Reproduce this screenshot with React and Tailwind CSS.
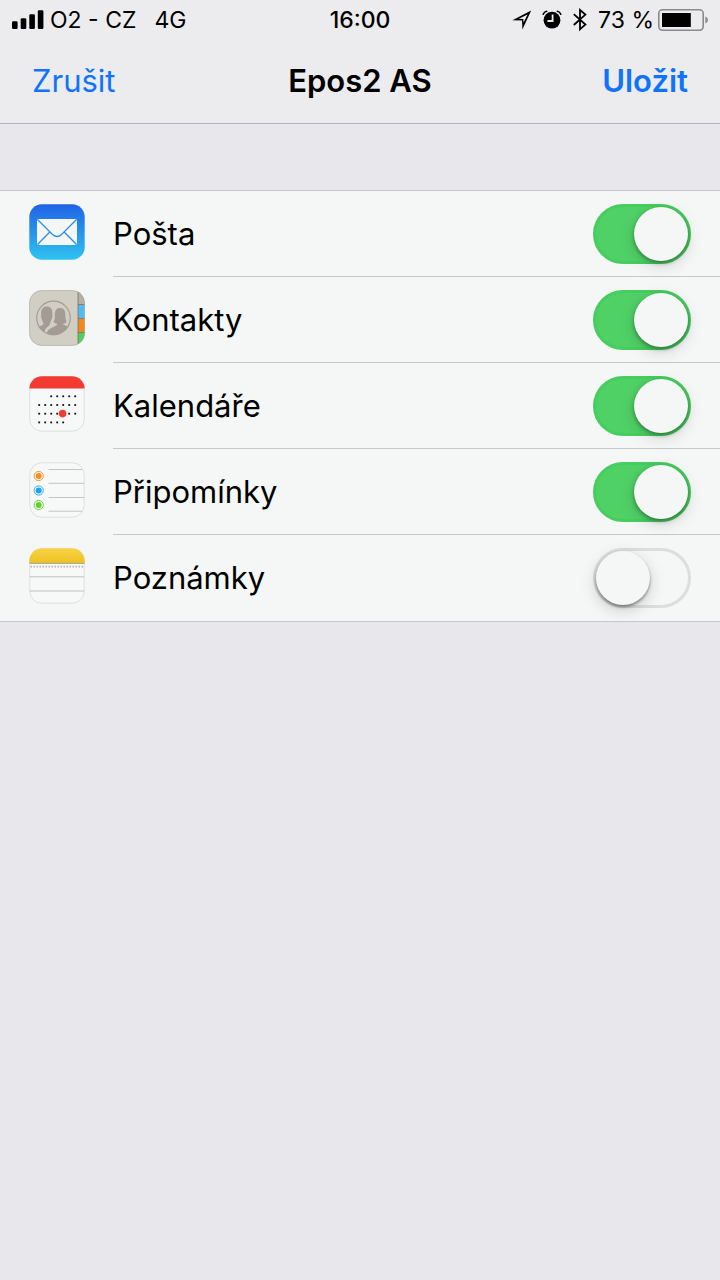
import React, { useState } from 'react';
import clsx from 'clsx';

const SignalIcon = () => (
    <svg className="w-8 h-5" viewBox="0 0 32 20" aria-hidden="true">
        <rect x="0" y="11.2" width="5.6" height="7.8" rx="1.2" />
        <rect x="8.7" y="8.2" width="5.6" height="10.8" rx="1.2" />
        <rect x="17.3" y="4.2" width="5.6" height="14.8" rx="1.2" />
        <rect x="25.8" y="0.3" width="5.6" height="18.7" rx="1.2" />
    </svg>
);

const LocationIcon = () => (
    <svg className="w-5 h-5" viewBox="0 0 20 20" fill="none" aria-hidden="true">
        <path d="M19.2 0.6 L0.4 10.2 L10 10.4 L10.4 19.4 Z M15.6 4.4 L11.6 12.6 L11.3 9 L6.8 8.8 Z" fill="#000" fillRule="evenodd" />
    </svg>
);

const AlarmIcon = () => (
    <svg className="w-5 h-5" viewBox="0 0 20 20" fill="none" aria-hidden="true">
        <circle cx="10" cy="10.2" r="8.4" fill="#000" />
        <path d="M1.2 4.2 Q2.2 1.8 4.6 1.3 M18.8 4.2 Q17.8 1.8 15.4 1.3" stroke="#000" strokeWidth="1.6" strokeLinecap="round" />
        <path d="M10.6 4.6 V11 H5.4" stroke="#ececee" strokeWidth="1.8" />
    </svg>
);

const BluetoothIcon = () => (
    <svg className="w-4 h-6" viewBox="0 0 16 24" fill="none" stroke="#000" strokeWidth="1.8" aria-hidden="true">
        <path d="M1.8 6.2 L13.4 16.6 L8 21.2 V2 L13.4 6.6 L1.8 17" />
    </svg>
);

const BatteryIcon = () => (
    <svg className="w-[50px] h-[22px]" viewBox="0 0 50 22" fill="none" aria-hidden="true">
        <rect x="0.8" y="0.8" width="44.4" height="20.4" rx="3.6" stroke="#8a8a8c" strokeWidth="1.6" />
        <rect x="4" y="4" width="28.8" height="14" fill="#000" />
        <path d="M47.3 7.5 Q50 8.4 50 11 Q50 13.6 47.3 14.5 Z" fill="#8a8a8c" />
    </svg>
);

const MailIcon = () => (
    <svg className="w-14 h-14" viewBox="0 0 56 56" aria-hidden="true">
        <defs>
            <linearGradient id="mailBg" x1="0" y1="0" x2="0" y2="1">
                <stop offset="0" stopColor="#1f63e6" />
                <stop offset="1" stopColor="#2fc3f0" />
            </linearGradient>
        </defs>
        <rect x="0.3" y="0.3" width="55.4" height="55.4" rx="12.5" fill="url(#mailBg)" />
        <rect x="8" y="15" width="40" height="26" rx="1.5" fill="#f5f7f6" />
        <g fill="none" stroke="#2a8fea" strokeWidth="1.3">
            <path d="M8.5 15.5 L23.5 30.5 Q28 34.5 32.5 30.5 L47.5 15.5" />
            <path d="M8.5 40.5 L20.8 28 M47.5 40.5 L35.2 28" />
        </g>
    </svg>
);

const ContactsIcon = () => (
    <svg className="w-14 h-14" viewBox="0 0 56 56" aria-hidden="true">
        <defs>
            <clipPath id="contactsShape">
                <rect x="0.3" y="0.3" width="55.4" height="55.4" rx="12.5" />
            </clipPath>
            <clipPath id="contactsDisc">
                <circle cx="24.5" cy="28" r="16.8" />
            </clipPath>
        </defs>
        <g clipPath="url(#contactsShape)">
            <rect width="56" height="56" fill="#d1cfc4" />
            <rect x="49" y="0" width="7" height="15" fill="#b6b1a7" />
            <rect x="49" y="15" width="7" height="13.5" fill="#55b9f2" />
            <rect x="49" y="28.5" width="7" height="14" fill="#f18a1c" />
            <rect x="49" y="42.5" width="7" height="14" fill="#4fcf5c" />
            <path d="M49 0 V56 M49 14.5 H56 M49 28.5 H56 M49 42.5 H56" stroke="#77716a" strokeWidth="0.8" />
        </g>
        <rect x="0.6" y="0.6" width="54.8" height="54.8" rx="12.2" fill="none" stroke="#a9a69c" strokeWidth="0.8" opacity="0.7" />
        <g clipPath="url(#contactsDisc)" fill="#a49b94">
            <path d="M31 18 C35.5 18 36.6 21.5 36.3 26 C36.3 29.5 38 31 37.2 32.4 C36 33.6 34.4 33.2 34 34 C34 35.6 40 35.6 42 38.5 L38 48 H16 L18.5 41 C20 38 27.6 36.5 28.4 34 C27 33.4 25.4 33.4 24.4 31.8 C25.8 30 26 28 25.8 25 C25.8 20.5 27.5 18 31 18 Z" />
            <path d="M17.8 16.6 C22.2 16.6 23.8 20 23.3 25 C23.8 27 23 28.5 22.4 29.8 C21.8 32 20.8 32.8 20.9 34 C21 35.6 17.4 37.5 16.6 40 V48 H5 L6 38.2 C9 36 14.4 36 14.4 33.8 C14.4 32.3 13.2 31.5 12.9 29.2 C12.2 28 11.7 27 12.2 25 C11.6 20 13.4 16.6 17.8 16.6 Z" />
            <path d="M23.4 31.6 C23.4 37 16.6 36.4 16.4 42.5" fill="none" stroke="#d1cfc4" strokeWidth="1.6" />
        </g>
        <circle cx="24.5" cy="28" r="16.8" fill="none" stroke="#a49b94" strokeWidth="1.2" />
    </svg>
);

// month grid, x positions per week
const weeks = [
    [22, 28, 34, 40, 46],
    [10, 16, 22, 28, 34, 40, 46],
    [10, 16, 22, 28, 34, 40, 46],
    [10, 16, 22, 28, 34],
];

const CalendarIcon = () => (
    <svg className="w-14 h-14" viewBox="0 0 56 56" aria-hidden="true">
        <defs>
            <clipPath id="calendarShape">
                <rect x="0.3" y="0.3" width="55.4" height="55.4" rx="12.5" />
            </clipPath>
        </defs>
        <rect x="0.8" y="0.8" width="54.4" height="54.4" rx="12" fill="#f7f9f8" stroke="#dedfdf" />
        <rect width="56" height="12.5" fill="#f23c31" clipPath="url(#calendarShape)" />
        {weeks.map((days, row) =>
            days.map((x) => (
                <rect key={`${row}-${x}`} x={x - 0.7} y={19.4 + row * 8.7} width="1.8" height="1.8" fill="#111" />
            ))
        )}
        <circle cx="33.6" cy="37.6" r="3.8" fill="#f23c31" />
    </svg>
);

const RemindersIcon = () => (
    <svg className="w-14 h-14" viewBox="0 0 56 56" aria-hidden="true">
        <rect x="0.8" y="0.8" width="54.4" height="54.4" rx="12" fill="#f7f9f8" stroke="#dedfdf" />
        <path d="M19.5 7.5 H53 M19.5 21.3 H55.2 M19.5 35.5 H55.2 M19.5 49.2 H53" stroke="#c3c4c4" strokeWidth="1" />
        {[['#f5901e', 14], ['#1ba5f3', 28.5], ['#5ed52f', 43]].map(([color, y]) => (
            <g key={color}>
                <circle cx="9.7" cy={y} r="4.6" fill="none" stroke={color} strokeWidth="0.9" />
                <circle cx="9.7" cy={y} r="3" fill={color} />
            </g>
        ))}
    </svg>
);

const NotesIcon = () => (
    <svg className="w-14 h-14" viewBox="0 0 56 56" aria-hidden="true">
        <defs>
            <linearGradient id="notesTop" x1="0" y1="0" x2="0" y2="1">
                <stop offset="0" stopColor="#f8d34b" />
                <stop offset="1" stopColor="#edc21f" />
            </linearGradient>
            <clipPath id="notesShape">
                <rect x="0.3" y="0.3" width="55.4" height="55.4" rx="12.5" />
            </clipPath>
        </defs>
        <rect x="0.8" y="0.8" width="54.4" height="54.4" rx="12" fill="#f7f9f8" stroke="#dedfdf" />
        <rect width="56" height="15" fill="url(#notesTop)" clipPath="url(#notesShape)" />
        <path d="M0.5 15.4 H55.5" stroke="#a5a294" strokeWidth="1" />
        <path d="M1.5 18.6 H55" stroke="#b4b4b4" strokeWidth="1.6" strokeDasharray="1.5 1.5" />
        <path d="M0.8 28.8 H55.2 M0.8 43 H55.2" stroke="#bfc0c0" strokeWidth="1" />
    </svg>
);

const services = [
    { id: 'mail', label: 'Pošta', Icon: MailIcon, on: true },
    { id: 'contacts', label: 'Kontakty', Icon: ContactsIcon, on: true },
    { id: 'calendars', label: 'Kalendáře', Icon: CalendarIcon, on: true },
    { id: 'reminders', label: 'Připomínky', Icon: RemindersIcon, on: true },
    { id: 'notes', label: 'Poznámky', Icon: NotesIcon, on: false },
];

const Toggle = ({ id, checked, onChange }) => (
    <input
        id={id}
        type="checkbox"
        role="switch"
        checked={checked}
        onChange={onChange}
        className={clsx(
            "appearance-none shrink-0 flex items-center w-[98px] h-[60px] rounded-full border-[3px] cursor-pointer before:content-[''] before:block before:w-[54px] before:h-[54px] before:rounded-full before:bg-[#f5f7f6]",
            checked
                ? 'justify-end border-[#47cd5e] bg-[#50d166] before:shadow-[0_2px_4px_rgba(0,0,0,0.35),0_5px_16px_rgba(0,0,0,0.14)]'
                : 'justify-start border-[#dcdedd] bg-[#f5f7f6] before:shadow-[0_2px_3px_rgba(0,0,0,0.4),0_5px_16px_rgba(0,0,0,0.18)]'
        )}
    />
);

const StatusBar = () => (
    <div className="grid grid-cols-[1fr_auto_1fr] items-center h-10 px-3 text-[23px] leading-6">
        <div className="flex items-center gap-1.5">
            <SignalIcon />
            <span>O2 - CZ</span>
            <span className="ml-3">4G</span>
        </div>
        <time className="font-medium">16:00</time>
        <div className="flex items-center justify-end gap-[10px]">
            <LocationIcon />
            <AlarmIcon />
            <BluetoothIcon />
            <div className="flex items-center gap-1">
                <span>73 %</span>
                <BatteryIcon />
            </div>
        </div>
    </div>
);

export default function App() {
    const [enabled, setEnabled] = useState(
        Object.fromEntries(services.map((s) => [s.id, s.on]))
    );

    const toggle = (id) => setEnabled((prev) => ({ ...prev, [id]: !prev[id] }));

    return (
        <div className="min-h-screen bg-[#e7e7ec] text-black font-[Inter,'Liberation_Sans',sans-serif]">
            <header className="bg-[#ececee] border-b border-[#b2b2b6]">
                <StatusBar />
                <nav className="grid grid-cols-[1fr_auto_1fr] items-center h-[83px] px-8 pb-0.5 text-[31px] leading-10">
                    <button type="button" className="justify-self-start text-[#0f74fb]">Zrušit</button>
                    <h1 className="font-semibold">Epos2 AS</h1>
                    <button type="button" className="justify-self-end font-semibold text-[#0f74fb]">Uložit</button>
                </nav>
            </header>

            {/* Account services */}
            <main className="pt-[66px]">
                <ul className="bg-[#f5f7f6] border-y border-[#c8c8cc]">
                    {services.map(({ id, label, Icon }) => (
                        <li key={id} className="group flex items-center h-[86px] pl-[29px]">
                            <div className="shrink-0 mr-7 mb-1">
                                <Icon />
                            </div>
                            <div className="flex-1 flex items-center justify-between h-full pr-[29px] border-b border-[#c8c8cc] group-last:border-b-0">
                                <label htmlFor={id} className="text-[31px] leading-10">{label}</label>
                                <Toggle id={id} checked={enabled[id]} onChange={() => toggle(id)} />
                            </div>
                        </li>
                    ))}
                </ul>
            </main>
        </div>
    );
}
